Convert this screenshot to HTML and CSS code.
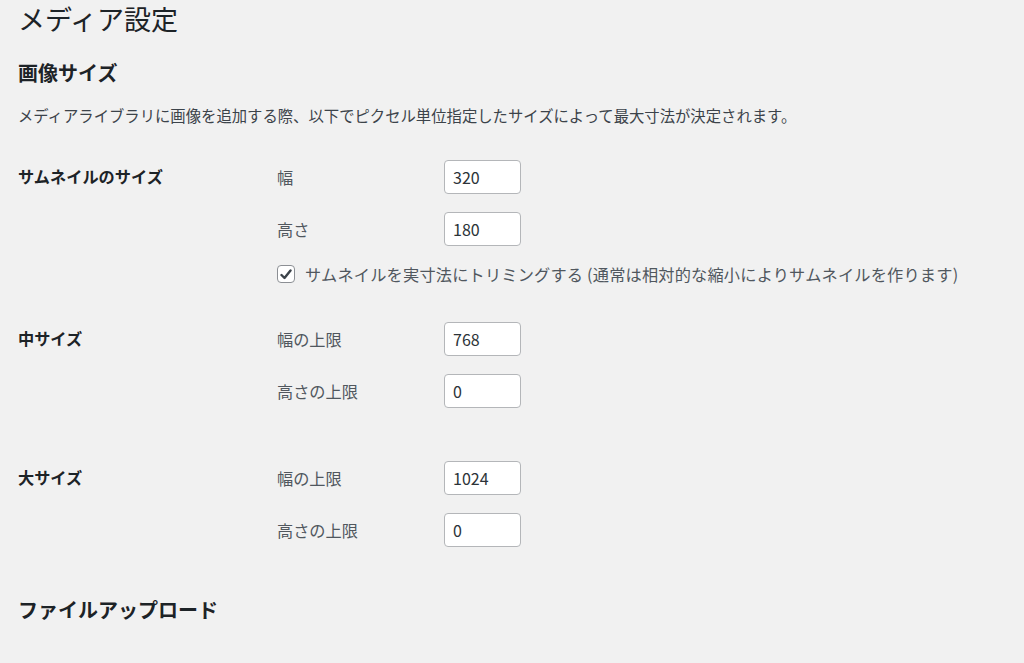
FILE: index.html
```html
<!DOCTYPE html>
<html lang="ja">
<head>
    <meta charset="UTF-8">
    <meta name="viewport" content="width=device-width, initial-scale=1.0">
    <title>メディア設定</title>
    <link rel="stylesheet" href="styles.css">
</head>
<body>
    <div class="wrap">
        <h1>メディア設定</h1>

        <h2>画像サイズ</h2>
        <p class="desc">メディアライブラリに画像を追加する際、以下でピクセル単位指定したサイズによって最大寸法が決定されます。</p>

        <div class="setting-row row-thumb">
            <div class="setting-name">サムネイルのサイズ</div>
            <div class="setting-fields">
                <div class="field">
                    <label for="thumbnail_size_w">幅</label>
                    <input type="text" id="thumbnail_size_w" value="320">
                </div>
                <div class="field">
                    <label for="thumbnail_size_h">高さ</label>
                    <input type="text" id="thumbnail_size_h" value="180">
                </div>
                <div class="check-line">
                    <span class="checkbox">
                        <svg width="12" height="11" viewBox="0 0 12 11"><path d="M1.5 6 L4.5 9 L10.5 1.5" fill="none" stroke="#3c434a" stroke-width="2.4" stroke-linecap="round" stroke-linejoin="round"/></svg>
                    </span>
                    <span>サムネイルを実寸法にトリミングする (通常は相対的な縮小によりサムネイルを作ります)</span>
                </div>
            </div>
        </div>

        <div class="setting-row row-medium">
            <div class="setting-name">中サイズ</div>
            <div class="setting-fields">
                <div class="field">
                    <label for="medium_size_w">幅の上限</label>
                    <input type="text" id="medium_size_w" value="768">
                </div>
                <div class="field">
                    <label for="medium_size_h">高さの上限</label>
                    <input type="text" id="medium_size_h" value="0">
                </div>
            </div>
        </div>

        <div class="setting-row row-large">
            <div class="setting-name">大サイズ</div>
            <div class="setting-fields">
                <div class="field">
                    <label for="large_size_w">幅の上限</label>
                    <input type="text" id="large_size_w" value="1024">
                </div>
                <div class="field">
                    <label for="large_size_h">高さの上限</label>
                    <input type="text" id="large_size_h" value="0">
                </div>
            </div>
        </div>

        <h2 class="upload-title">ファイルアップロード</h2>
    </div>
</body>
</html>
```

FILE: styles.css
```css
body {
    margin: 0;
    background: #f1f1f1;
    font-family: "Noto Sans CJK JP", "Noto Sans", sans-serif;
    color: #3c434a;
    font-size: 15px;
}
.wrap {
    padding-left: 18px;
}
h1 {
    margin: 0;
    font-size: 27px;
    line-height: 38px;
    font-weight: 400;
    color: #1d2327;
}
h2 {
    margin: 21px 0 0;
    font-size: 20px;
    line-height: 28px;
    font-weight: 700;
    color: #1d2327;
}
.desc {
    margin: 17px 0 0;
    font-size: 15.35px;
    line-height: 22px;
}
.setting-row {
    display: grid;
    grid-template-columns: 259px 1fr;
}
.row-thumb {
    margin-top: 34px;
}
.row-medium {
    margin-top: 31px;
}
.row-large {
    margin-top: 53px;
}
.setting-name {
    font-size: 16.2px;
    font-weight: 700;
    color: #1d2327;
    line-height: 32px;
}
.setting-fields {
    display: flex;
    flex-direction: column;
    gap: 18px;
}
.field {
    display: flex;
    align-items: center;
    height: 34px;
}
.field label {
    width: 167px;
    font-size: 16.2px;
    color: #50575e;
}
.field input {
    box-sizing: border-box;
    width: 77px;
    height: 34px;
    padding: 0 8px;
    border: 1px solid #b4b6b9;
    border-radius: 4px;
    background: #fff;
    font-family: inherit;
    font-size: 16px;
    color: #2c3338;
}
.check-line {
    display: flex;
    align-items: center;
    gap: 10px;
    height: 34px;
    margin-top: -7px;
    font-size: 16.2px;
    letter-spacing: 0.2px;
    color: #50575e;
}
.checkbox {
    box-sizing: border-box;
    width: 18px;
    height: 18px;
    border: 1px solid #8c8f94;
    border-radius: 4px;
    background: #fff;
    display: flex;
    align-items: center;
    justify-content: center;
}
.upload-title {
    margin-top: 49px;
}
```
